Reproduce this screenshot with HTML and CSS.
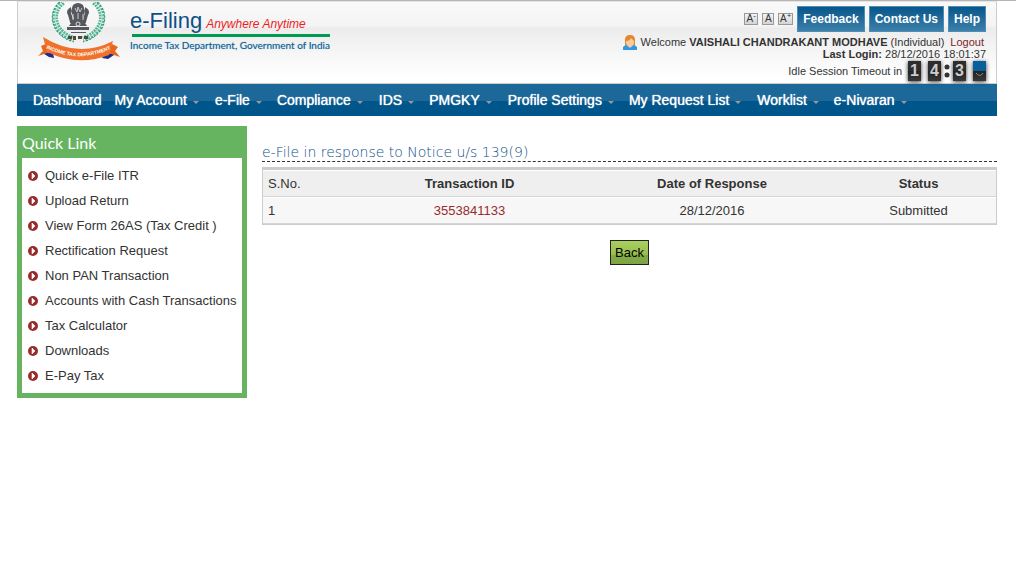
FILE: index.html
```html
<!DOCTYPE html>
<html lang="en">
<head>
<meta charset="utf-8">
<title>e-Filing</title>
<link rel="stylesheet" href="styles.css">
</head>
<body>
<svg class="symbols" aria-hidden="true">
  <symbol id="bullet" viewBox="0 0 10 10"><circle cx="5" cy="5" r="5" fill="#982b2b"/><path d="M4 2v6l3-3z" fill="#fff" stroke="#fff" stroke-width=".6"/></symbol>
</svg>
<div class="page">
  <header class="header">
    <div class="brand">
      <svg class="emblem" viewBox="0 0 86 60" aria-hidden="true">
        <g fill="none" stroke="#4fb394">
          <path d="M26 0C12 10 17 32 37 37" stroke-width="6" stroke-dasharray="2 1"/>
          <path d="M57 0C71 10 66 32 46 37" stroke-width="6" stroke-dasharray="2 1"/>
          <path d="M26 0C12 10 17 32 37 37M57 0C71 10 66 32 46 37" stroke="#bfe6d8" stroke-width="1"/>
          <path d="M23 0C9 11 14 34 37 40M60 0C74 11 69 34 46 40" stroke="#23906f" stroke-width="1" stroke-dasharray="2 2"/>
        </g>
        <g fill="#55585c">
          <path d="M36 3q5-4 10 0l2 6-2 8h-9l-3-8z"/>
          <path d="M34 5q-6 3-3 8l2 7h4l-3-9zM48 5q6 3 3 8l-2 7h-4l3-9z"/>
          <path d="M33 17h16v4H33zM34 21h14l2 3H32zM30 25h22v3H30z"/>
          <path d="M34 30h15v1H34z"/>
          <path d="M31 34h4v3h-4zM36 34h3v4h-3zM41 34h4v3h-4zM47 34h4v3h-4z" fill="#51483a"/>
        </g>
        <path d="M38 6l2 4 1-5 2 5 2-4M36 12v6M41 11v6M46 12v6" fill="none" stroke="#c9cccf"/>
        <circle cx="41" cy="22" r="2" fill="none" stroke="#ddd"/>
        <path d="M4 50l12 1 1 5-5-1zM80 51l-12 1-3 4 6 1z" fill="#1c2b8c"/>
        <path d="M1 54l5-5-2-5 7-3 5 8zM83 55l-5-6 3-4-8-4-5 9z" fill="#e8651f"/>
        <path d="M6 35Q41 57 76 39L72 53Q41 65 10 50z" fill="#f0722a"/>
        <path id="ribbon" d="M7 45Q41 63 76 46" fill="none"/>
        <text class="ribbon-text"><textPath href="#ribbon" startOffset="50%" text-anchor="middle">INCOME TAX DEPARTMENT</textPath></text>
      </svg>
      <div class="brand-text">
        <div class="brand-title"><span class="brand-name">e-Filing</span><em class="tagline">Anywhere Anytime</em></div>
        <div class="department">Income Tax Department, Government of India</div>
      </div>
    </div>
    <div class="account">
      <div class="tools">
        <button class="font-size" aria-label="Decrease text size">A<sup>-</sup></button>
        <button class="font-size">A</button>
        <button class="font-size" aria-label="Increase text size">A<sup>+</sup></button>
        <a class="tool" href="#">Feedback</a>
        <a class="tool" href="#">Contact Us</a>
        <a class="tool" href="#">Help</a>
      </div>
      <div class="welcome">
        <svg class="user" viewBox="0 0 14 15" aria-hidden="true">
          <path d="M0 15v-3l4-3h6l4 3v3z" fill="#2f98e0"/>
          <path d="M4 9h6l-3 4z" fill="#d9eefc"/>
          <path d="M2 5q0-5 5-5t5 5v5H2z" fill="#e2872c"/>
          <path d="M3 6q4 0 5-3l3 3v2q-1 4-4 4T3 8z" fill="#ffc899"/>
        </svg>
        <span>Welcome <b>VAISHALI CHANDRAKANT MODHAVE</b> (Individual)</span>
        <a class="logout" href="#">Logout</a>
      </div>
      <div class="last-login"><b>Last Login:</b> 28/12/2016 18:01:37</div>
      <div class="timeout">
        <span>Idle Session Timeout in</span>
        <span class="clock"><b class="digit">1</b><b class="digit">4</b><svg class="colon" viewBox="0 0 6 14" aria-hidden="true"><circle cx="3" cy="3" r="2.5"/><circle cx="3" cy="11" r="2.5"/></svg><b class="digit">3</b><b class="digit"><svg class="turning" viewBox="0 0 13 20" aria-hidden="true"><path d="M0 0h13v10H0z" fill="#07609a"/><path d="M3 12q4 5 7 0" fill="none" stroke="#888"/></svg></b></span>
      </div>
    </div>
  </header>

  <nav class="menu">
    <a href="#">Dashboard</a>
    <a class="has-menu" href="#">My Account</a>
    <a class="has-menu" href="#">e-File</a>
    <a class="has-menu" href="#">Compliance</a>
    <a class="has-menu" href="#">IDS</a>
    <a class="has-menu" href="#">PMGKY</a>
    <a class="has-menu" href="#">Profile Settings</a>
    <a class="has-menu" href="#">My Request List</a>
    <a class="has-menu" href="#">Worklist</a>
    <a class="has-menu" href="#">e-Nivaran</a>
  </nav>

  <div class="columns">
    <aside class="quick">
      <h2>Quick Link</h2>
      <ul>
        <li><svg class="bullet"><use href="#bullet"/></svg><a href="#">Quick e-File ITR</a></li>
        <li><svg class="bullet"><use href="#bullet"/></svg><a href="#">Upload Return</a></li>
        <li><svg class="bullet"><use href="#bullet"/></svg><a href="#">View Form 26AS (Tax Credit )</a></li>
        <li><svg class="bullet"><use href="#bullet"/></svg><a href="#">Rectification Request</a></li>
        <li><svg class="bullet"><use href="#bullet"/></svg><a href="#">Non PAN Transaction</a></li>
        <li><svg class="bullet"><use href="#bullet"/></svg><a href="#">Accounts with Cash Transactions</a></li>
        <li><svg class="bullet"><use href="#bullet"/></svg><a href="#">Tax Calculator</a></li>
        <li><svg class="bullet"><use href="#bullet"/></svg><a href="#">Downloads</a></li>
        <li><svg class="bullet"><use href="#bullet"/></svg><a href="#">E-Pay Tax</a></li>
      </ul>
    </aside>
    <main class="content">
      <h1>e-File in response to Notice u/s 139(9)</h1>
      <table class="responses">
        <thead>
          <tr><th class="serial">S.No.</th><th class="transaction">Transaction ID</th><th class="date">Date of Response</th><th class="status">Status</th></tr>
        </thead>
        <tbody>
          <tr><td class="serial">1</td><td><a href="#">3553841133</a></td><td>28/12/2016</td><td>Submitted</td></tr>
        </tbody>
      </table>
      <button class="back">Back</button>
    </main>
  </div>
</div>
</body>
</html>
```
FILE: styles.css
```css
* { box-sizing: border-box; }
body {
  margin: 0;
  border-top: 1px solid #b5b5b5;
  background: #fff;
  color: #333;
  font: 13px/16px "Liberation Sans", Arial, sans-serif;
}
a { color: inherit; text-decoration: none; }
.symbols { display: none; }
.page { padding: 0 19px 0 17px; }

.header {
  display: flex;
  justify-content: space-between;
  min-height: 83px;
  padding: 0 10px 0 19px;
  border: 1px solid #ccc;
  border-top-color: #e4e4e4;
  background: linear-gradient(#f9f9f9, #f4f4f4 24px, #ececec 26px, #fff 75px);
}
.brand { display: flex; gap: 7px; }
.emblem { width: 86px; height: 60px; }
.ribbon-text { fill: #fff; font: bold 5px "Liberation Sans", sans-serif; }
.brand-text { padding-top: 6px; }
.brand-title {
  display: flex;
  align-items: baseline;
  gap: 4px;
  margin-left: 2px;
  height: 29px;
  border-bottom: 3px solid #009a52;
}
.brand-name {
  margin-left: -2px;
  color: #0d4f87;
  font-size: 22px;
  line-height: 26px;
}
.tagline { color: #ee1c24; font-size: 12px; }
.department {
  color: #0d5f93;
  font: 10px/17px Lato, sans-serif;
  text-shadow: 0 0 1px #8ab4d0;
}

.account {
  display: flex;
  flex-direction: column;
  align-items: flex-end;
  padding-top: 4px;
  font-size: 11px;
  line-height: 12px;
}
.tools { display: flex; align-items: center; gap: 4px; font-size: 12px; }
.font-size {
  width: 14px;
  height: 12px;
  padding: 0;
  border: 1px solid #999;
  background: linear-gradient(#f3f3f3, #d4d4d4);
  color: #333;
  font: 10px/10px "Liberation Sans", Arial, sans-serif;
}
.font-size:nth-child(2) { width: 12px; }
.font-size:nth-child(3) { width: 15px; }
.font-size sup { font-size: 8px; line-height: 0; }
.tool {
  padding: 5px;
  border: 1px solid #4d8cb4;
  background: linear-gradient(#07568a, #3d80ab);
  color: #fff;
  font-weight: bold;
  line-height: 14px;
}
.welcome { display: flex; align-items: center; gap: 4px; height: 16px; margin: 2px 2px 0 0; }
.user { width: 14px; height: 15px; }
.logout { margin-left: 2px; color: #7a1f1f; }
.last-login { margin-top: -2px; }
.timeout { display: flex; align-items: center; gap: 6px; margin-top: 1px; }
.clock { display: flex; align-items: center; gap: 7px; }
.digit {
  width: 13px;
  height: 20px;
  background: linear-gradient(#2d2d2d 10px, #222 10px, #383838);
  box-shadow: 0 1px 4px #333;
  color: #ccc;
  font-size: 16px;
  line-height: 20px;
  text-align: center;
}
.turning { display: block; width: 13px; height: 20px; }
.colon { width: 6px; height: 14px; margin: 0 -4px; fill: #333; }

.menu {
  display: flex;
  gap: 13px;
  padding: 0 16px;
  background: linear-gradient(#1b6899 17px, #00568a 17px);
  color: #fff;
  font-size: 14px;
  line-height: 32px;
  text-shadow: 0 0 1px #fff;
  white-space: nowrap;
}
.has-menu { display: flex; align-items: center; gap: 6px; }
.has-menu::after {
  content: "";
  margin: 5px 2px 0 0;
  border: 3px solid transparent;
  border-top-color: #999;
  border-bottom: 0;
}
.has-menu:nth-child(2n)::after { margin-right: 3px; }

.columns { display: flex; align-items: flex-start; gap: 15px; padding-top: 10px; }
.quick { flex: 0 0 230px; border: 5px solid #66b45f; }
.quick h2 {
  margin: 0;
  padding: 1px 0 5px;
  background: #66b45f;
  color: #fff;
  font: 16px/21px "Lato", sans-serif;
}
.quick ul { margin: 0; padding: 5px 0; list-style: none; }
.quick li {
  display: flex;
  align-items: center;
  gap: 7px;
  padding-left: 6px;
  line-height: 25px;
  white-space: nowrap;
}
.bullet { width: 10px; height: 10px; margin-top: 1px; }

.content { flex: 1; min-width: 0; padding-top: 17px; text-align: center; }
.content h1 {
  margin: 0 0 5px;
  border-bottom: 1px dashed #333;
  color: #0c4f88;
  font: 200 14px/18px "DejaVu Sans Light", "DejaVu Sans", sans-serif;
  text-align: left;
}
.responses {
  width: 100%;
  table-layout: fixed;
  border: 1px solid #ccc;
  border-top-width: 3px;
  border-spacing: 0;
}
.responses th, .responses td {
  padding: 4px 5px;
  border-top: 1px solid #fff;
  border-bottom: 1px solid #d5d5d5;
  background: #f7f7f7;
  line-height: 17px;
}
.responses th { background: #efefef; }
.responses .serial { width: 93px; text-align: left; font-weight: normal; }
.responses .transaction { width: 227px; }
.responses .date { width: 258px; }
.responses .status { width: 155px; }
.responses a { color: #982b2b; }
.back {
  margin-top: 15px;
  padding: 0 4px;
  border: 1px solid #222;
  background: linear-gradient(#a9cf62, #98bd4e 60%, #83aa43 60%, #7da545);
  color: #000;
  font: 13px/23px "Liberation Sans", Arial, sans-serif;
}
```
